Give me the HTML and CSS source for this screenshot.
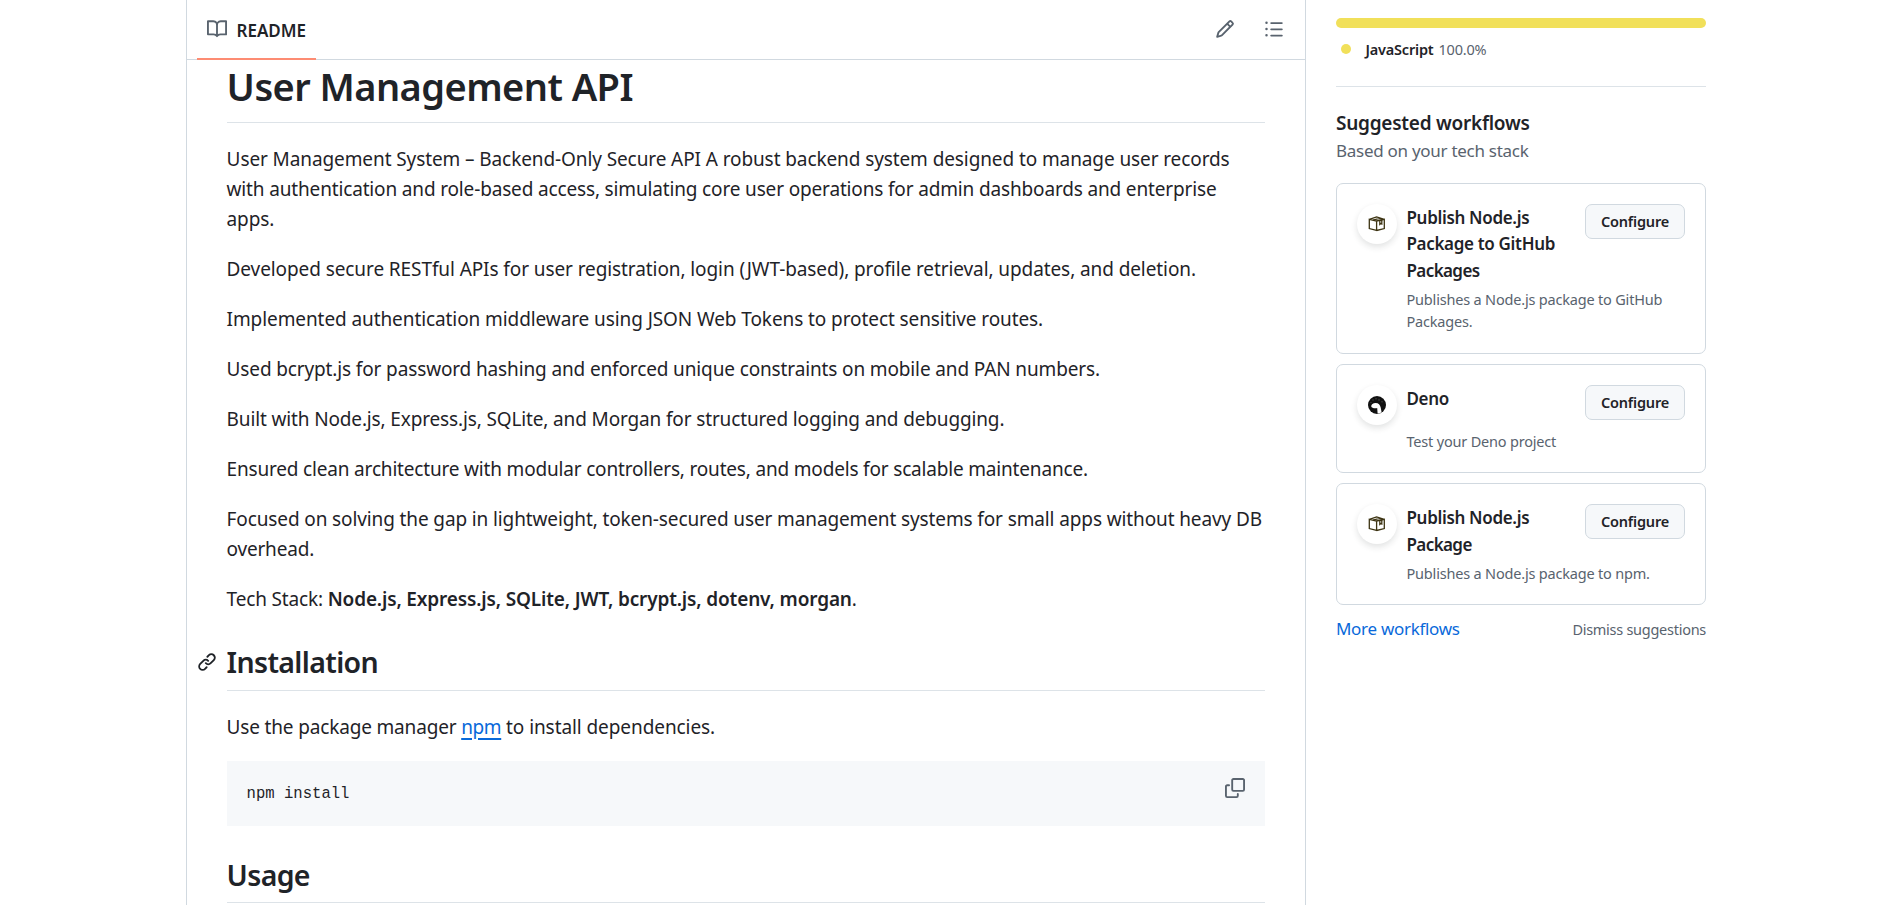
FILE: index.html
```html
<!DOCTYPE html>
<html lang="en">
<head>
<meta charset="utf-8">
<title>User Management API</title>
<link rel="stylesheet" href="styles.css">
</head>
<body>
<div class="page">
  <main class="readme">
    <header class="readme-bar">
      <div class="tab">
        <svg class="icon" viewBox="0 0 16 16"><path d="M0 1.75A.75.75 0 0 1 .75 1h4.253c1.227 0 2.317.59 3 1.501A3.743 3.743 0 0 1 11.006 1h4.245a.75.75 0 0 1 .75.75v10.5a.75.75 0 0 1-.75.75h-4.507a2.25 2.25 0 0 0-1.591.659l-.622.621a.75.75 0 0 1-1.06 0l-.622-.621A2.25 2.25 0 0 0 5.258 13H.75a.75.75 0 0 1-.75-.75Zm7.251 10.324.004-5.073-.002-2.253A2.25 2.25 0 0 0 5.003 2.5H1.5v9h3.757a3.75 3.75 0 0 1 1.994.574ZM8.755 4.75l-.004 7.322a3.752 3.752 0 0 1 1.992-.572H14.5v-9h-3.495a2.25 2.25 0 0 0-2.25 2.25Z"/></svg>
        <span class="tab-label">README</span>
      </div>
      <div class="tools">
        <svg class="icon" viewBox="0 0 16 16"><path d="M11.013 1.427a1.75 1.75 0 0 1 2.474 0l1.086 1.086a1.75 1.75 0 0 1 0 2.474l-8.61 8.61c-.21.21-.47.364-.756.445l-3.251.93a.75.75 0 0 1-.927-.928l.929-3.25c.081-.286.235-.547.445-.758l8.61-8.61Zm.176 4.823L9.75 4.81l-6.286 6.287a.253.253 0 0 0-.064.108l-.558 1.953 1.953-.558a.253.253 0 0 0 .108-.064Zm1.238-3.763a.25.25 0 0 0-.354 0L10.811 3.75l1.439 1.44 1.263-1.263a.25.25 0 0 0 0-.354Z"/></svg>
        <svg class="icon" viewBox="0 0 16 16"><path d="M5.75 2.5h8.5a.75.75 0 0 1 0 1.5h-8.5a.75.75 0 0 1 0-1.5Zm0 5h8.5a.75.75 0 0 1 0 1.5h-8.5a.75.75 0 0 1 0-1.5Zm0 5h8.5a.75.75 0 0 1 0 1.5h-8.5a.75.75 0 0 1 0-1.5ZM2 14a1 1 0 1 1 0-2 1 1 0 0 1 0 2Zm1-6a1 1 0 1 1-2 0 1 1 0 0 1 2 0ZM2 4a1 1 0 1 1 0-2 1 1 0 0 1 0 2Z"/></svg>
      </div>
    </header>
    <article class="markdown">
      <h1>User Management API</h1>
      <p><span class="line l1">User Management System – Backend-Only Secure API A robust backend system designed to manage user records</span>
      <span class="line l2">with authentication and role-based access, simulating core user operations for admin dashboards and enterprise</span>
      <span class="line l3">apps.</span></p>
      <p class="l4">Developed secure RESTful APIs for user registration, login (JWT-based), profile retrieval, updates, and deletion.</p>
      <p class="l5">Implemented authentication middleware using JSON Web Tokens to protect sensitive routes.</p>
      <p class="l6">Used bcrypt.js for password hashing and enforced unique constraints on mobile and PAN numbers.</p>
      <p class="l7">Built with Node.js, Express.js, SQLite, and Morgan for structured logging and debugging.</p>
      <p class="l8">Ensured clean architecture with modular controllers, routes, and models for scalable maintenance.</p>
      <p><span class="line l9">Focused on solving the gap in lightweight, token-secured user management systems for small apps without heavy DB</span>
      <span class="line l10">overhead.</span></p>
      <p><span class="l11">Tech Stack: </span><strong class="l12">Node.js, Express.js, SQLite, JWT, bcrypt.js, dotenv, morgan</strong>.</p>
      <h2><svg class="anchor" viewBox="0 0 16 16"><path d="m7.775 3.275 1.25-1.25a3.5 3.5 0 1 1 4.95 4.95l-2.5 2.5a3.5 3.5 0 0 1-4.95 0 .751.751 0 0 1 .018-1.042.751.751 0 0 1 1.042-.018 1.998 1.998 0 0 0 2.83 0l2.5-2.5a2.002 2.002 0 0 0-2.83-2.83l-1.25 1.25a.751.751 0 0 1-1.042-.018.751.751 0 0 1-.018-1.042Zm-4.69 9.64a1.998 1.998 0 0 0 2.83 0l1.25-1.25a.751.751 0 0 1 1.042.018.751.751 0 0 1 .018 1.042l-1.25 1.25a3.5 3.5 0 1 1-4.95-4.95l2.5-2.5a3.5 3.5 0 0 1 4.95 0 .751.751 0 0 1-.018 1.042.751.751 0 0 1-1.042.018 1.998 1.998 0 0 0-2.83 0l-2.5 2.5a1.998 1.998 0 0 0 0 2.83Z"/></svg>Installation</h2>
      <p><span class="l13">Use the package manager </span><a class="l14">npm</a><span class="l15"> to install dependencies.</span></p>
      <div class="code"><code>npm install</code>
        <svg class="icon" viewBox="0 0 16 16"><path d="M0 6.75C0 5.784.784 5 1.75 5h1.5a.75.75 0 0 1 0 1.5h-1.5a.25.25 0 0 0-.25.25v7.5c0 .138.112.25.25.25h7.5a.25.25 0 0 0 .25-.25v-1.5a.75.75 0 0 1 1.5 0v1.5A1.75 1.75 0 0 1 9.25 16h-7.5A1.75 1.75 0 0 1 0 14.25Z"/><path d="M5 1.75C5 .784 5.784 0 6.75 0h7.5C15.216 0 16 .784 16 1.75v7.5A1.75 1.75 0 0 1 14.25 11h-7.5A1.75 1.75 0 0 1 5 9.25Zm1.75-.25a.25.25 0 0 0-.25.25v7.5c0 .138.112.25.25.25h7.5a.25.25 0 0 0 .25-.25v-7.5a.25.25 0 0 0-.25-.25Z"/></svg>
      </div>
      <h2>Usage</h2>
    </article>
  </main>
  <aside class="sidebar">
    <div class="lang-bar"></div>
    <div class="lang"><i class="dot"></i><b>JavaScript</b><span>100.0%</span></div>
    <h3>Suggested workflows</h3>
    <div class="sub">Based on your tech stack</div>
    <div class="cards">
      <section class="card">
        <div class="badge"><svg viewBox="0 0 18 18"><path d="M1.3 4.3 8.600 6v9.500l-7.300-1.900ZM8.600 6l7.700-1.700v9.300l-7.700 1.900M1.300 4.300 8.600 2l7.700 2.300M5 5.100 12.400 3.100"/><path d="M11.800 5.400v4l1-.8 1 .4V5Z"/></svg></div>
        <div class="name">Publish Node.js<br>Package to GitHub<br><span class="tight">Packages</span></div>
        <div class="btn">Configure</div>
        <div class="desc">Publishes a Node.js package to GitHub<br>Packages.</div>
      </section>
      <section class="card">
        <div class="badge"><svg viewBox="0 0 18 18"><circle cx="9" cy="9" r="9" class="ink"/><path class="paper" d="M3.200 10.300C3.300 8.400 5 7 7.600 7c3 0 4.500 1.700 5.100 4.600l.9 4.700c-1.200.8-2.600 1.200-4 1.300l-.4-5.500c-2.300.5-5.700.1-6-1.800Z"/><path class="rain" d="M5 3.200v1.500M8 2v1.500M11 2.800v2M14 5v1.500M3 6v1"/></svg></div>
        <div class="name">Deno</div>
        <div class="btn">Configure</div>
        <div class="desc">Test your Deno project</div>
      </section>
      <section class="card">
        <div class="badge"><svg viewBox="0 0 18 18"><path d="M1.3 4.3 8.600 6v9.500l-7.300-1.900ZM8.600 6l7.700-1.700v9.300l-7.700 1.900M1.300 4.300 8.600 2l7.700 2.300M5 5.100 12.400 3.100"/><path d="M11.800 5.400v4l1-.8 1 .4V5Z"/></svg></div>
        <div class="name">Publish Node.js<br><span class="tight">Package</span></div>
        <div class="btn">Configure</div>
        <div class="desc">Publishes a Node.js package to npm.</div>
      </section>
    </div>
    <div class="more"><a>More workflows</a><span>Dismiss suggestions</span></div>
  </aside>
</div>
</body>
</html>
```

FILE: styles.css
```css
* { box-sizing: border-box; }
body { margin: 0; background: #fff; color: #1f2328; font-family: "Noto Sans", sans-serif; overflow: hidden; }
.page { display: flex; height: 905px; padding-left: 186px; gap: 30px; overflow: hidden; }
.readme { width: 1120px; border: solid #d1d9e0; border-width: 0 1px; }
.readme-bar { height: 60px; display: flex; justify-content: space-between; border-bottom: 1px solid #d1d9e0; padding: 0 21px 0 10px; }
.icon { width: 20px; height: 20px; fill: #59636e; flex: none; display: block; }
.tab { height: 60px; width: 119px; display: flex; align-items: center; gap: 9.5px; padding: 0 0 1px 10px; border-bottom: 2px solid #fd8c73; font-size: 17px; font-weight: 600; white-space: nowrap; }
.tab .icon { margin-top: 1px; }
.tab-label { padding-top: 3px; }
.tools { display: flex; gap: 29px; padding-top: 19px; }
.markdown { padding: 0 40px 0 39.6px; font-size: 19px; line-height: 30px; }
.markdown p { margin: 0 0 19px; padding-top: 1px; white-space: nowrap; }
.line { display: block; }
.l1 { letter-spacing: -.098px; }
.l2 { letter-spacing: -.155px; }
.l3 { letter-spacing: -.141px; }
.l4 { letter-spacing: -.09px; }
.l5 { letter-spacing: -.089px; }
.l6 { letter-spacing: -.134px; }
.l7 { letter-spacing: -.14px; }
.l8 { letter-spacing: -.18px; }
.l9 { letter-spacing: -.12px; }
.l10 { letter-spacing: -.2px; }
.l11, .l13 { letter-spacing: -.164px; }
.l12 { letter-spacing: -.145px; }
.l14 { letter-spacing: -.39px; }
.l15 { letter-spacing: -.08px; }
h1, h2, h3 { margin: 0; font-weight: 600; white-space: nowrap; }
h1 { font-size: 38px; line-height: 50px; height: 63px; padding-top: 1px; border-bottom: 1px solid #dde3e8; margin-bottom: 20px; letter-spacing: -.56px; }
h2 { position: relative; font-size: 28.5px; line-height: 37.5px; height: 47.5px; padding-top: 1px; margin: 29px 0 20px; border-bottom: 1px solid #dde3e8; letter-spacing: -.65px; }
.anchor { position: absolute; left: -30px; top: 9px; width: 20px; height: 20px; fill: #1f2328; }
a { color: #0969da; }
p a { text-decoration: underline 2px; text-underline-offset: 4px; }
strong { font-weight: 600; }
.code { display: flex; justify-content: space-between; height: 65px; padding: 20px; margin-bottom: 30px; background: #f6f8fa; }
.code code { font: 15.58px/27px "Liberation Mono", monospace; }
.code .icon { margin-top: -3px; }
.sidebar { width: 370px; padding-top: 18px; white-space: nowrap; }
.lang-bar { height: 10px; border-radius: 5px; background: #f1e05a; }
.lang { height: 59px; padding: 10px 0 0 5px; display: flex; font-size: 14.5px; line-height: 22px; letter-spacing: -.2px; border-bottom: 1px solid #dde3e8; }
.dot { width: 10px; height: 10px; border-radius: 50%; background: #f1e05a; margin: 6px 14.5px 0 0; }
.lang b { font-weight: 600; margin-right: 5px; }
.lang span, .sub, .desc { color: #59636e; }
h3 { font-size: 19px; line-height: 30px; margin-top: 21px; letter-spacing: -.25px; }
.sub { font-size: 17px; line-height: 26px; letter-spacing: -.28px; }
.cards { display: grid; gap: 10px; margin-top: 19px; }
.card { border: 1px solid #d1d9e0; border-radius: 7px; padding: 20px; display: grid; grid-template-columns: 40px 1fr 100px; grid-template-rows: minmax(40px, auto) auto; column-gap: 9.5px; row-gap: 5px; }
.badge { width: 40px; height: 40px; border-radius: 50%; display: grid; place-items: center; box-shadow: 0 3px 6px rgba(31, 35, 40, .13); }
.badge svg { width: 18px; height: 18px; fill: none; stroke: #3d3413; stroke-width: 1.3; }
.badge .ink { fill: #111; stroke: none; }
.badge .paper { fill: #fff; stroke: none; }
.badge .rain { stroke: #555; stroke-width: .8; }
.name { font-size: 17px; font-weight: 600; line-height: 26.25px; letter-spacing: -.33px; padding-top: 1px; margin-bottom: -1px; }
.tight { letter-spacing: -.6px; }
.btn { height: 35px; border: 1px solid #d1d9e0; border-radius: 7px; background: #f6f8fa; font-size: 14.5px; font-weight: 600; line-height: 33px; letter-spacing: -.19px; text-align: center; }
.desc { grid-column: 2 / 4; font-size: 14.5px; line-height: 22.5px; letter-spacing: -.19px; }
.more { display: flex; justify-content: space-between; align-items: baseline; font-size: 17px; line-height: 26px; margin-top: 11px; letter-spacing: -.3px; }
.more span { font-size: 14.5px; color: #59636e; letter-spacing: -.27px; }
```
